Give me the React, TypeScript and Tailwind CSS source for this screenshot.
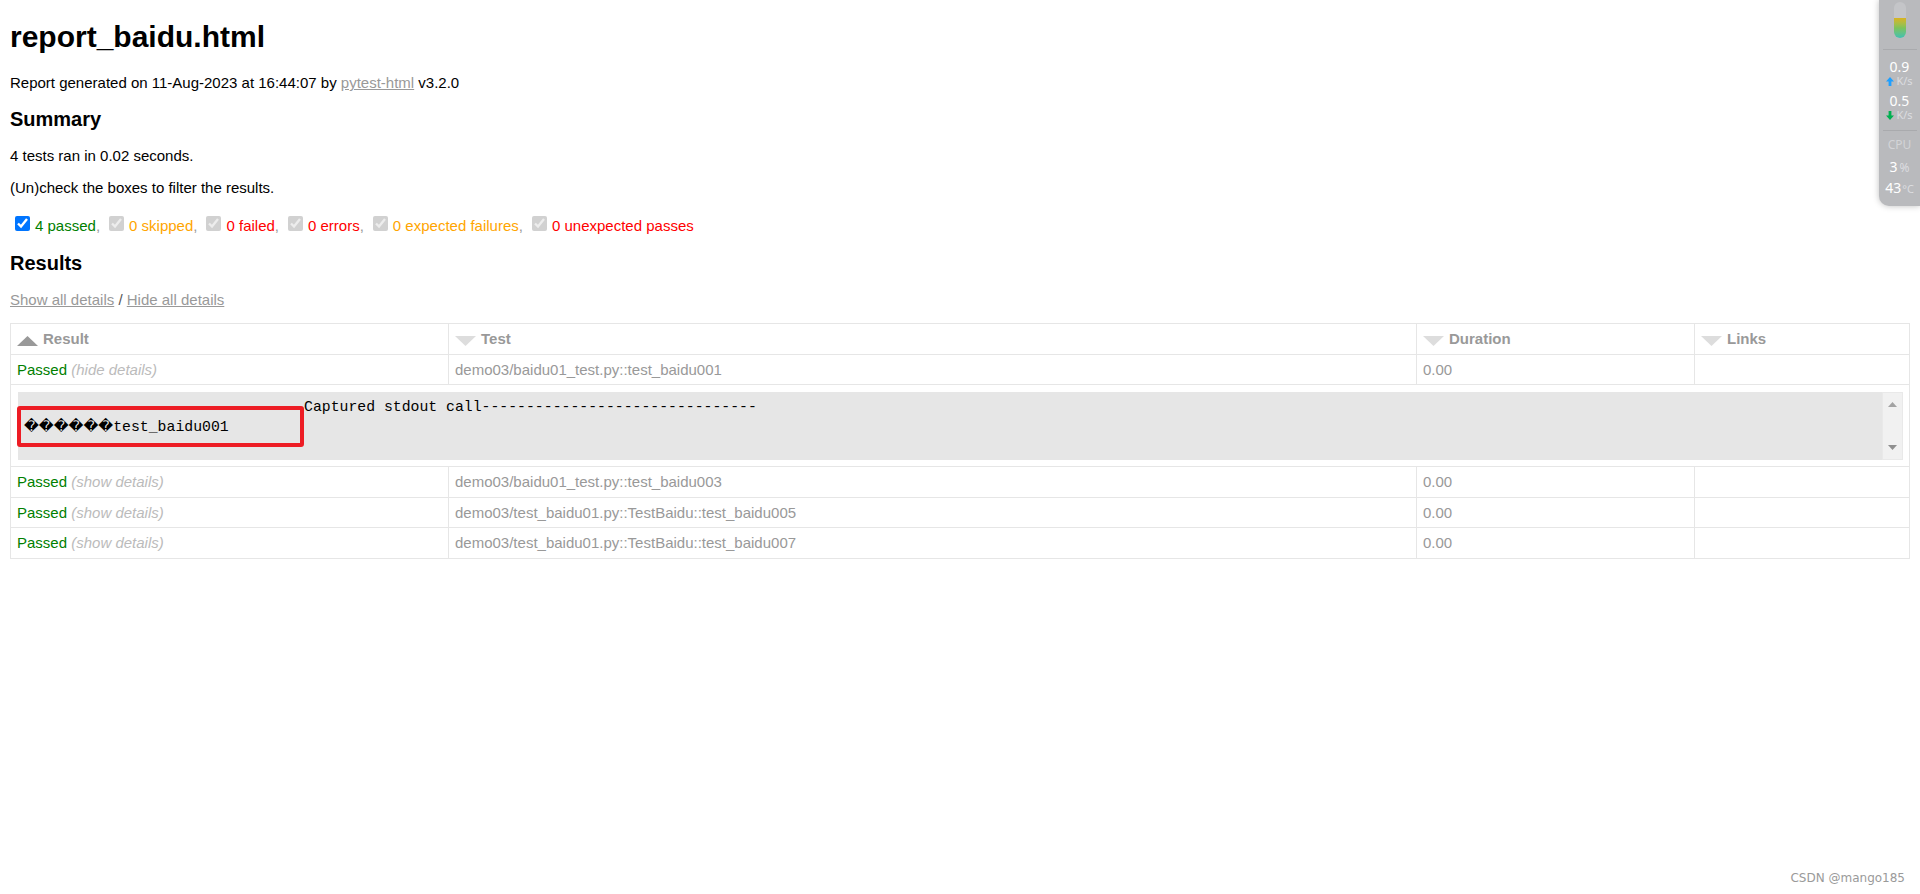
import React from "react";

const filters = [
  { label: "4 passed", color: "text-[#008000]", on: true },
  { label: "0 skipped", color: "text-[#ffa500]" },
  { label: "0 failed", color: "text-[#ff0000]" },
  { label: "0 errors", color: "text-[#ff0000]" },
  { label: "0 expected failures", color: "text-[#ffa500]" },
  { label: "0 unexpected passes", color: "text-[#ff0000]", last: true },
];

const rows = [
  { name: "demo03/baidu01_test.py::test_baidu001", toggle: "hide details", open: true, h: "h-[30px]" },
  { name: "demo03/baidu01_test.py::test_baidu003", toggle: "show details", h: "h-[31px]" },
  { name: "demo03/test_baidu01.py::TestBaidu::test_baidu005", toggle: "show details", h: "h-[30px]" },
  { name: "demo03/test_baidu01.py::TestBaidu::test_baidu007", toggle: "show details", h: "h-[31px]" },
];

function Sort({ up }: { up?: boolean }) {
  return (
    <svg width="21" height="10" viewBox="0 0 21 10" className="mt-[3px] shrink-0">
      <polygon points={up ? "10.5,0 21,10 0,10" : "0,0 21,0 10.5,10"} fill={up ? "#999999" : "#dddddd"} />
    </svg>
  );
}

function Head({ label, up, className }: { label: string; up?: boolean; className: string }) {
  return (
    <th className={`h-[31px] border border-[#e6e6e6] pl-[6px] pt-[1px] text-left align-middle text-[15px] font-bold text-[#999999] ${className}`}>
      <div className="flex items-center gap-[5px]">
        <Sort up={up} />
        <span>{label}</span>
      </div>
    </th>
  );
}

function Cell({ children, h }: { children?: React.ReactNode; h: string }) {
  return <td className={`${h} border border-[#e6e6e6] pl-[6px] pt-[1px] align-middle text-[15px] text-[#999999]`}>{children}</td>;
}

function Monitor() {
  return (
    <div className="absolute right-0 top-0 flex h-[206px] w-[41px] flex-col items-center rounded-bl-[10px] bg-[#b9babd] font-['Noto_Sans',sans-serif] shadow-[0_0_6px_rgba(0,0,0,0.25)]">
      <div className="mt-[2px] flex h-[36px] w-[12px] flex-col overflow-hidden rounded-full bg-[#c4c5c8]">
        <div className="mt-[16px] flex-1 bg-gradient-to-b from-[#d8b31c] via-[#7cc35a] to-[#3fc0b0]" />
      </div>
      <div className="mt-[11px] h-px w-[34px] bg-[#a9aaad]" />
      <div className="mt-[8px] text-[14px] leading-[18px] text-white">0.9</div>
      <div className="flex items-center gap-[2px] leading-[10px]">
        <svg width="8" height="9" viewBox="0 0 8 9"><polygon points="4,0 8,4.5 5.4,4.5 5.4,9 2.6,9 2.6,4.5 0,4.5" fill="#1e9fff" /></svg>
        <span className="text-[11px] text-[#dcdde0]">K/s</span>
      </div>
      <div className="mt-[6px] text-[14px] leading-[18px] text-white">0.5</div>
      <div className="flex items-center gap-[2px] leading-[10px]">
        <svg width="8" height="9" viewBox="0 0 8 9"><polygon points="4,9 8,4.5 5.4,4.5 5.4,0 2.6,0 2.6,4.5 0,4.5" fill="#00b050" /></svg>
        <span className="text-[11px] text-[#dcdde0]">K/s</span>
      </div>
      <div className="mt-[10px] h-px w-[34px] bg-[#a9aaad]" />
      <div className="mt-[7px] text-[12px] leading-[14px] text-[#d3d4d7]">CPU</div>
      <div className="mt-[7px] text-[14px] leading-[16px] text-white">3<span className="ml-[2px] text-[12px] text-[#dcdde0]">%</span></div>
      <div className="mt-[4px] whitespace-nowrap text-[14px] leading-[16px] text-white">43<span className="ml-[1px] text-[11px] text-[#dcdde0]">°C</span></div>
    </div>
  );
}

export default function App() {
  return (
    <div className="relative h-[894px] w-[1920px] overflow-hidden bg-white pl-[10px] font-['Liberation_Sans',Arial,sans-serif] text-[15px] text-black">
      <h1 className="pt-[20px] text-[30px] font-bold leading-[34px]">report_baidu.html</h1>
      <p className="mt-[20px] leading-[18px]">
        Report generated on 11-Aug-2023 at 16:44:07 by{" "}
        <a className="text-[#999999] underline">pytest-html</a> v3.2.0
      </p>
      <h2 className="mt-[15px] text-[20px] font-bold leading-[24px]">Summary</h2>
      <p className="mt-[16px] leading-[18px]">4 tests ran in 0.02 seconds.</p>
      <p className="mt-[14px] leading-[18px]">(Un)check the boxes to filter the results.</p>
      <div className="mt-[19px] flex h-[20px] items-center pl-[5px]">
        {filters.map((f) => (
          <span key={f.label} className="flex items-center">
            <input type="checkbox" checked disabled={!f.on} readOnly className="mb-[5px] h-[15px] w-[15px]" />
            <span className={`ml-[5px] ${f.color}`}>{f.label}</span>
            {!f.last && <span className="mr-[9px] text-[#999999]">,</span>}
          </span>
        ))}
      </div>
      <h2 className="mt-[15px] text-[20px] font-bold leading-[24px]">Results</h2>
      <p className="mt-[16px] leading-[18px] text-[#999999]">
        <a className="underline">Show all details</a> <span className="text-[#555555]">/</span>{" "}
        <a className="underline">Hide all details</a>
      </p>
      <table className="mt-[14px] w-[1899px] table-fixed border-collapse">
        <thead>
          <tr>
            <Head label="Result" up className="w-[438px]" />
            <Head label="Test" className="w-[968px]" />
            <Head label="Duration" className="w-[278px]" />
            <Head label="Links" className="w-[215px]" />
          </tr>
        </thead>
        <tbody>
          {rows.map((r) => (
            <React.Fragment key={r.name}>
              <tr>
                <Cell h={r.h}>
                  <span className="text-[#008000]">Passed</span>{" "}
                  <span className="italic text-[#bbbbbb]">({r.toggle})</span>
                </Cell>
                <Cell h={r.h}>{r.name}</Cell>
                <Cell h={r.h}>0.00</Cell>
                <Cell h={r.h} />
              </tr>
              {r.open && (
                <tr>
                  <td colSpan={4} className="h-[82px] border border-[#e6e6e6] pb-[6px] pl-[7px] pr-[6px] pt-[7px] align-top">
                    <div className="flex h-[68px] bg-[#e6e6e6]">
                      <pre className="flex-1 overflow-hidden pl-[6px] pt-[5px] font-['Liberation_Mono','DejaVu_Sans',monospace] text-[14.8px] leading-[20px] text-black">
                        <span className="inline-block w-[280px]" />
                        {"Captured stdout call-------------------------------\n"}
                        <span className="text-[14.5px]">{"\uFFFD\uFFFD\uFFFD\uFFFD\uFFFD\uFFFD"}</span>
                        {"test_baidu001"}
                      </pre>
                      <div className="flex w-[21px] flex-col items-center justify-between border border-[#e9e9e9] bg-[#f1f1f1] py-[9px]">
                        <svg width="9" height="5" viewBox="0 0 9 5"><polygon points="4.5,0 9,5 0,5" fill="#a3a3a3" /></svg>
                        <svg width="9" height="5" viewBox="0 0 9 5"><polygon points="0,0 9,0 4.5,5" fill="#8f8f8f" /></svg>
                      </div>
                    </div>
                  </td>
                </tr>
              )}
            </React.Fragment>
          ))}
        </tbody>
      </table>

      <div className="absolute left-[17px] top-[406px] h-[41px] w-[287px] rounded-[3px] border-[4px] border-[#ed1c24]" />
      <Monitor />
      <div className="absolute right-[15px] top-[869px] font-['DejaVu_Sans',sans-serif] text-[12px] text-[#9a9a9a]">CSDN @mango185</div>
    </div>
  );
}
